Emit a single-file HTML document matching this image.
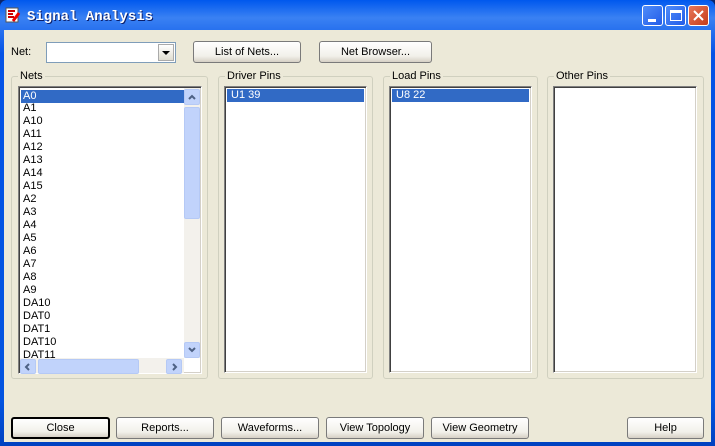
<!DOCTYPE html>
<html><head><style>
*{box-sizing:border-box;margin:0;padding:0}
body{width:715px;height:446px;overflow:hidden;background:#0a246a;font-family:"Liberation Sans",sans-serif;font-size:11px;position:relative}
.win{position:absolute;left:0;top:0;width:715px;height:446px;background:linear-gradient(#0058ee,#3a81f3 4%,#0553e6 12%,#0354e0 90%,#0041c0);border-radius:7px 7px 0 0}
.body{position:absolute;left:4px;top:30px;width:707px;height:412px;background:#ece9d8}
.title{position:absolute;left:27px;top:9px;color:#fff;font-family:"Liberation Mono",monospace;font-weight:bold;font-size:14px;text-shadow:1px 1px #0a1e6a}
.abs{position:absolute}
.tb{position:absolute;top:5px;width:21px;height:21px;border:1px solid #fff;border-radius:3px;background:linear-gradient(135deg,#4f8cf9,#225ce8)}
.btn{position:absolute;height:22px;border:1px solid #003c74;border-radius:3px;background:linear-gradient(#fff,#f2f1ea 70%,#d6d0c5);text-align:center;line-height:20px;font-size:11px;color:#000}
.grp{position:absolute;border:1px solid #d0d0bf;border-radius:3px}
.grp span{position:absolute;top:-7px;left:6px;background:#ece9d8;padding:0 2px;font-size:11px}
.lb{position:absolute;background:#fff;border:1px solid #808080;border-right-color:#fff;border-bottom-color:#fff;box-shadow:inset 1px 1px #404040,inset -1px -1px #d4d0c8}
.sel{position:absolute;background:#316ac5;color:#fff;height:13px;line-height:13px;padding-left:2px}
.it{position:absolute;left:23px;line-height:13px;font-size:11px}
.sb{position:absolute;background:#c1d3fb;border:1px solid #b5c9f5;border-radius:2px}
</style></head><body>
<div class="win">
<svg class="abs" style="left:5px;top:7px" width="16" height="16"><rect x="1" y="1" width="12" height="14" fill="#fff" stroke="#555"/><path d="M3 4h7M3 7h5M3 10h6" stroke="#c00" stroke-width="2"/><path d="M8 14l6-8" stroke="#e00" stroke-width="3"/></svg>
<div class="title">Signal Analysis</div>
<div class="tb" style="left:642px"><div class="abs" style="left:5px;top:13px;width:8px;height:3px;background:#fff"></div></div>
<div class="tb" style="left:665px"><div class="abs" style="left:4px;top:4px;width:12px;height:11px;border:1px solid #fff;border-top-width:3px"></div></div>
<div class="tb" style="left:688px;background:linear-gradient(135deg,#e8775a,#c63c1a)"><svg class="abs" style="left:3px;top:3px" width="13" height="13"><path d="M2 2L11 11M11 2L2 11" stroke="#fff" stroke-width="2"/></svg></div>
<div class="body"></div>
</div>
<div class="abs" style="left:11px;top:46px">Net:</div>
<div class="abs" style="left:46px;top:42px;width:130px;height:21px;background:#fff;border:1px solid #7f9db9"></div>
<div class="abs" style="left:158px;top:44px;width:16px;height:17px;background:linear-gradient(#fff,#e0ddd0);border:1px solid #aaa"><svg width="14" height="15"><path d="M3 6h8l-4 4z" fill="#000"/></svg></div>
<div class="btn" style="left:193px;top:41px;width:108px;border-color:#7a7a7a">List of Nets...</div>
<div class="btn" style="left:319px;top:41px;width:113px;border-color:#7a7a7a">Net Browser...</div>

<div class="grp" style="left:11px;top:76px;width:197px;height:303px"><span>Nets</span></div>
<div class="grp" style="left:218px;top:76px;width:155px;height:303px"><span>Driver Pins</span></div>
<div class="grp" style="left:383px;top:76px;width:155px;height:303px"><span>Load Pins</span></div>
<div class="grp" style="left:547px;top:76px;width:157px;height:303px"><span>Other Pins</span></div>

<div class="lb" style="left:18px;top:86px;width:184px;height:288px;overflow:hidden">
<div class="sel" style="left:2px;top:3px;width:163px">A0</div>
</div>
<div class="it" style="top:102px">A1</div><div class="it" style="top:115px">A10</div><div class="it" style="top:128px">A11</div><div class="it" style="top:141px">A12</div><div class="it" style="top:154px">A13</div><div class="it" style="top:167px">A14</div><div class="it" style="top:180px">A15</div><div class="it" style="top:193px">A2</div><div class="it" style="top:206px">A3</div><div class="it" style="top:219px">A4</div><div class="it" style="top:232px">A5</div><div class="it" style="top:245px">A6</div><div class="it" style="top:258px">A7</div><div class="it" style="top:271px">A8</div><div class="it" style="top:284px">A9</div><div class="it" style="top:297px">DA10</div><div class="it" style="top:310px">DAT0</div><div class="it" style="top:323px">DAT1</div><div class="it" style="top:336px">DAT10</div><div class="it" style="top:349px;height:9px;overflow:hidden">DAT11</div>
<div class="abs" style="left:184px;top:88px;width:16px;height:270px;background:#f3f1ec"></div>
<div class="sb" style="left:184px;top:89px;width:16px;height:16px"><svg width="14" height="14"><path d="M4 9l3-3 3 3" stroke="#4d6185" stroke-width="2" fill="none"/></svg></div>
<div class="sb" style="left:184px;top:107px;width:16px;height:112px"></div>
<div class="sb" style="left:184px;top:342px;width:16px;height:16px"><svg width="14" height="14"><path d="M4 5l3 3 3-3" stroke="#4d6185" stroke-width="2" fill="none"/></svg></div>
<div class="abs" style="left:20px;top:358px;width:164px;height:15px;background:#f3f1ec"></div>
<div class="sb" style="left:20px;top:359px;width:16px;height:15px"><svg width="14" height="14"><path d="M8 4l-3 3 3 3" stroke="#4d6185" stroke-width="2" fill="none"/></svg></div>
<div class="sb" style="left:38px;top:359px;width:101px;height:15px"></div>
<div class="sb" style="left:166px;top:359px;width:16px;height:15px"><svg width="14" height="14"><path d="M6 4l3 3-3 3" stroke="#4d6185" stroke-width="2" fill="none"/></svg></div>

<div class="lb" style="left:224px;top:86px;width:143px;height:287px"><div class="sel" style="left:2px;top:2px;width:137px;padding-left:4px">U1 39</div></div>
<div class="lb" style="left:389px;top:86px;width:143px;height:287px"><div class="sel" style="left:2px;top:2px;width:137px;padding-left:4px">U8 22</div></div>
<div class="lb" style="left:553px;top:86px;width:144px;height:287px"></div>

<div class="btn" style="left:11px;top:417px;width:99px;border:2px solid #000;line-height:18px">Close</div>
<div class="btn" style="left:116px;top:417px;width:98px;border-color:#7a7a7a">Reports...</div>
<div class="btn" style="left:221px;top:417px;width:98px;border-color:#7a7a7a">Waveforms...</div>
<div class="btn" style="left:326px;top:417px;width:98px;border-color:#7a7a7a">View Topology</div>
<div class="btn" style="left:431px;top:417px;width:98px;border-color:#7a7a7a">View Geometry</div>
<div class="btn" style="left:627px;top:417px;width:77px;border-color:#7a7a7a">Help</div>
</body></html>
